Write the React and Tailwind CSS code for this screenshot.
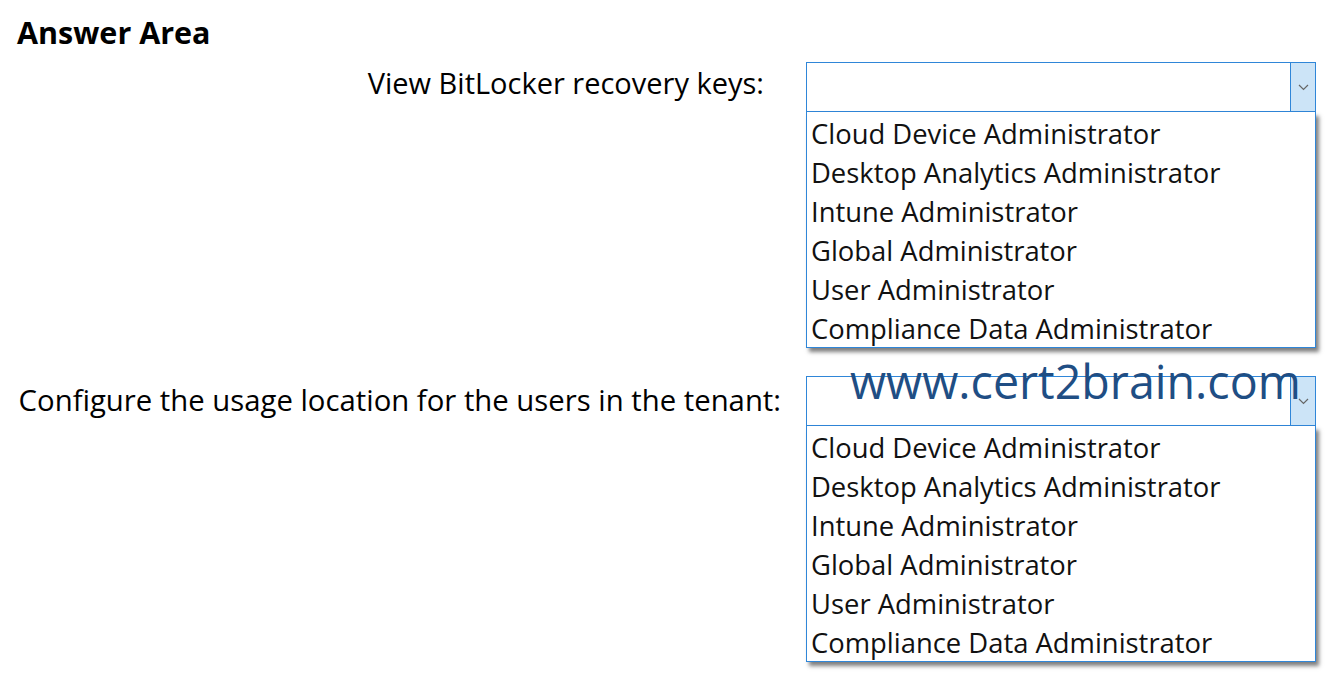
const options = [
  "Cloud Device Administrator",
  "Desktop Analytics Administrator",
  "Intune Administrator",
  "Global Administrator",
  "User Administrator",
  "Compliance Data Administrator",
];

const Dropdown = () => (
  <div className="w-[510px]">
    <div className="flex h-[50px] border border-[#2f86d8] bg-white">
      <div className="flex-1" />
      <div className="flex w-[25px] items-center justify-center border-l border-[#2f86d8] bg-[#cce4f7]">
        <svg width="11" height="7" viewBox="0 0 11 7" fill="none">
          <path d="M1 1l4.5 4.5L10 1" stroke="#666" strokeWidth="1.2" />
        </svg>
      </div>
    </div>
    <div className="h-[236px] border border-t-0 border-[#2f86d8] bg-white pt-[2px] pl-[4px] shadow-[3px_4px_4px_rgba(0,0,0,0.5)]">
      {options.map((o) => (
        <div key={o} className="h-[39px] text-[27.4px] leading-[39px] text-[#111]">
          {o}
        </div>
      ))}
    </div>
  </div>
);

export default function App() {
  return (
    <div
      className="relative h-[681px] w-[1334px] bg-white text-black"
      style={{ fontFamily: '"Open Sans", "Noto Sans", sans-serif' }}
    >
      <div className="pl-[17px] pt-[13px] text-[30.5px] font-bold leading-[38px]">Answer Area</div>

      <div className="mt-[11px] flex">
        <div className="w-[764px] pt-[2px] text-right text-[29px] leading-[38px]">
          View BitLocker recovery keys:
        </div>
        <div className="ml-[42px]">
          <Dropdown />
        </div>
      </div>

      <div className="mt-[28px] flex">
        <div className="w-[781px] pt-[5px] text-right text-[29.3px] leading-[38px]">
          Configure the usage location for the users in the tenant:
        </div>
        <div className="ml-[25px]">
          <Dropdown />
        </div>
      </div>

      <div className="absolute left-[850px] top-[353px] text-[46.6px] leading-[56px] text-[#1f4e84]">
        www.cert2brain.com
      </div>
    </div>
  );
}
